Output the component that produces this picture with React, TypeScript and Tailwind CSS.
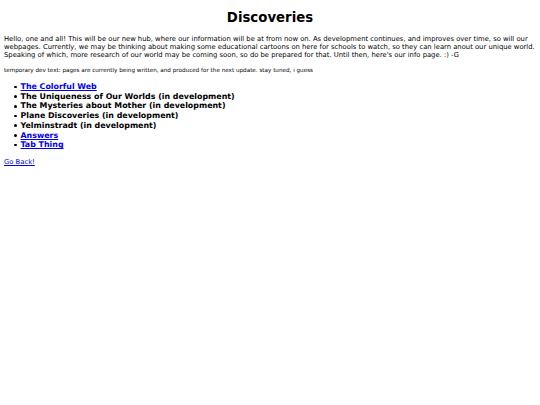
export default function App() {
  const items: { label: string; href?: boolean }[] = [
    { label: "The Colorful Web", href: true },
    { label: "The Uniqueness of Our Worlds (in development)" },
    { label: "The Mysteries about Mother (in development)" },
    { label: "Plane Discoveries (in development)" },
    { label: "Yelminstradt (in development)" },
    { label: "Answers", href: true },
    { label: "Tab Thing", href: true },
  ];

  return (
    <div className="min-h-[405px] bg-white px-[4px] text-black" style={{ fontFamily: '"DejaVu Sans", Verdana, sans-serif' }}>
      <h1 className="pt-[10px] text-center text-[13.3px] font-bold leading-[16px]">Discoveries</h1>

      <p className="mt-[9px] whitespace-nowrap text-[6.8px] leading-[8px]">
        Hello, one and all! This will be our new hub, where our information will be at from now on. As development continues, and improves over time, so will our
        <br />
        webpages. Currently, we may be thinking about making some educational cartoons on here for schools to watch, so they can learn anout our unique world.
        <br />
        Speaking of which, more research of our world may be coming soon, so do be prepared for that. Until then, here's our info page. :) -G
      </p>

      <p className="mt-[8px] text-[5.65px] leading-[7px]">
        temporary dev text: pages are currently being written, and produced for the next update. stay tuned, i guess
      </p>

      <ul className="mt-[8px] pl-[10px] text-[7.9px] font-bold leading-[9.7px]">
        {items.map((it) => (
          <li key={it.label} className="flex items-center">
            <span className="mr-[4px] h-[2.5px] w-[2.5px] shrink-0 rounded-full bg-black" />
            {it.href ? (
              <a href="#" className="text-[#0000ee] underline">{it.label}</a>
            ) : (
              <span>{it.label}</span>
            )}
          </li>
        ))}
      </ul>

      <a href="#" className="mt-[8px] block w-fit text-[6.8px] leading-[8px] text-[#0000ee] underline">Go Back!</a>
    </div>
  );
}
